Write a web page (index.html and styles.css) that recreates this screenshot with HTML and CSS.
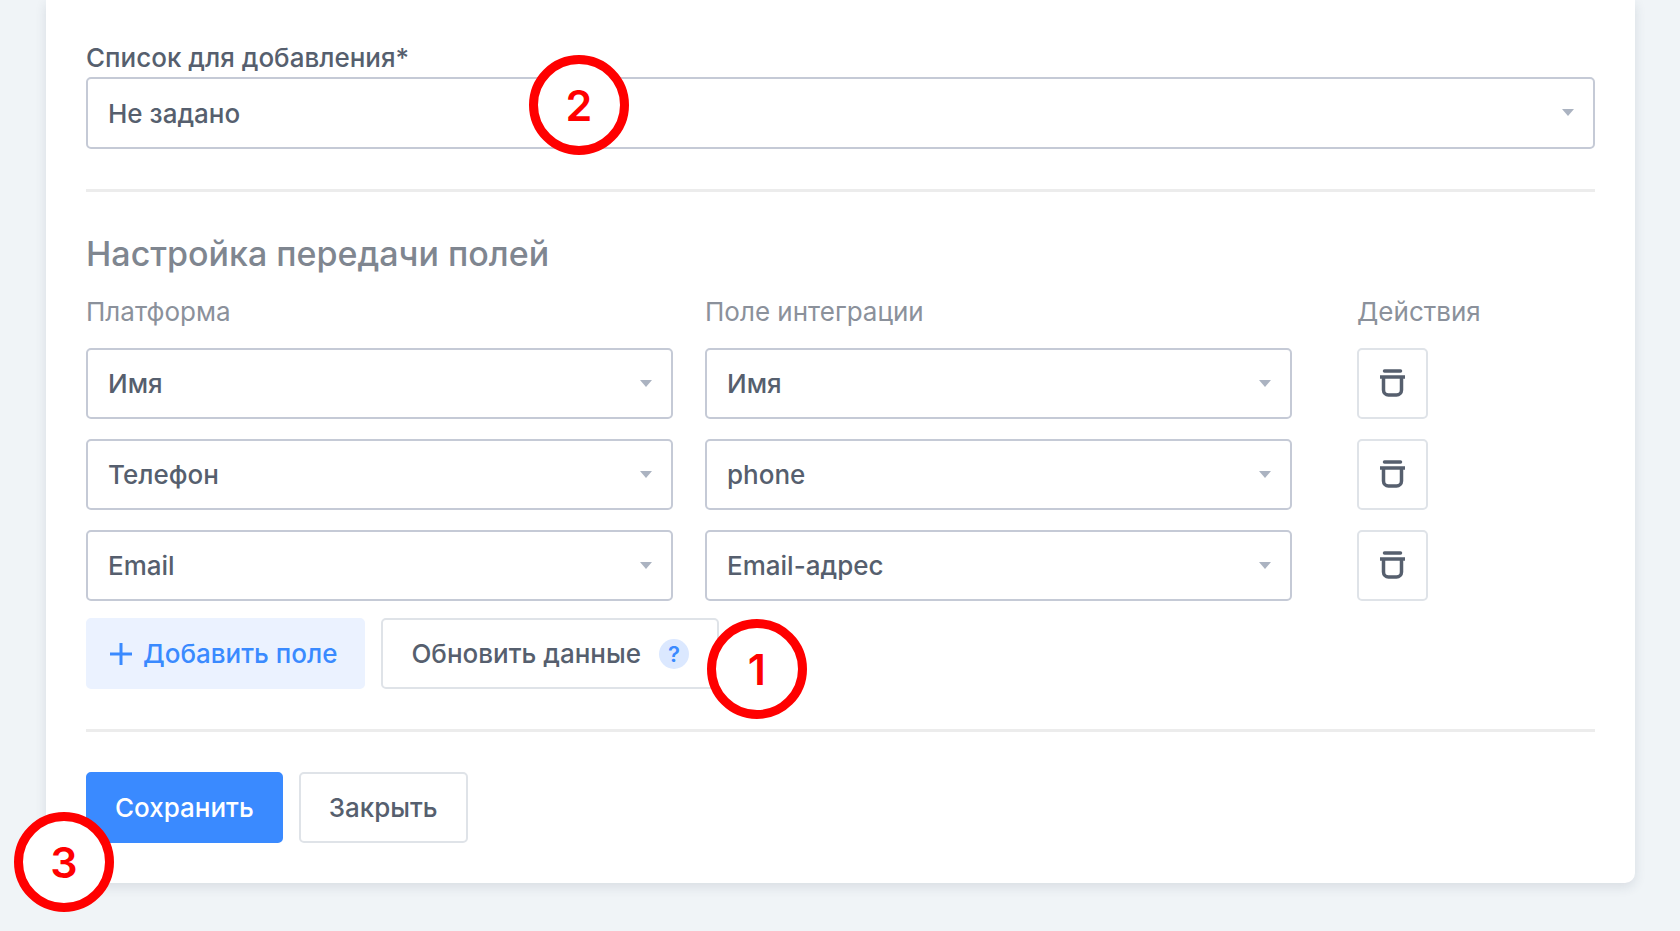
FILE: index.html
```html
<!DOCTYPE html>
<html lang="ru">
<head>
    <meta charset="UTF-8">
    <meta name="viewport" content="width=device-width, initial-scale=1.0">
    <title>Настройка интеграции</title>
    <link rel="stylesheet" href="styles.css">
</head>
<body>
    <main class="card">
        <form class="settings">
            <div class="field">
                <label class="field-label" for="list">Список для добавления*</label>
                <div class="select select-main">
                    <select id="list">
                        <option>Не задано</option>
                    </select>
                    <span class="badge badge-list">2</span>
                </div>
            </div>

            <hr>

            <h2>Настройка передачи полей</h2>

            <div class="mapping">
                <span class="col-title" id="col-platform">Платформа</span>
                <span class="col-title" id="col-integration">Поле интеграции</span>
                <span class="col-title actions">Действия</span>

                <div class="select">
                    <select aria-labelledby="col-platform">
                        <option>Имя</option>
                    </select>
                </div>
                <div class="select">
                    <select aria-labelledby="col-integration">
                        <option>Имя</option>
                    </select>
                </div>
                <div class="actions">
                    <button type="button" class="btn btn-icon" aria-label="Удалить">
                        <svg width="25" height="31" viewBox="0 0 25 31" fill="none" stroke="#565f6e" stroke-width="3.500">
                            <path d="M4.500 3H20.500" stroke-linecap="round"/>
                            <path d="M0 9H25"/>
                            <path d="M3.500 9V22A5 5 0 0 0 8.500 27H16.500A5 5 0 0 0 21.500 22V9"/>
                        </svg>
                    </button>
                </div>

                <div class="select">
                    <select aria-labelledby="col-platform">
                        <option>Телефон</option>
                    </select>
                </div>
                <div class="select">
                    <select aria-labelledby="col-integration">
                        <option>phone</option>
                    </select>
                </div>
                <div class="actions">
                    <button type="button" class="btn btn-icon" aria-label="Удалить">
                        <svg width="25" height="31" viewBox="0 0 25 31" fill="none" stroke="#565f6e" stroke-width="3.500">
                            <path d="M4.500 3H20.500" stroke-linecap="round"/>
                            <path d="M0 9H25"/>
                            <path d="M3.500 9V22A5 5 0 0 0 8.500 27H16.500A5 5 0 0 0 21.500 22V9"/>
                        </svg>
                    </button>
                </div>

                <div class="select">
                    <select aria-labelledby="col-platform">
                        <option>Email</option>
                    </select>
                </div>
                <div class="select">
                    <select aria-labelledby="col-integration">
                        <option>Email-адрес</option>
                    </select>
                </div>
                <div class="actions">
                    <button type="button" class="btn btn-icon" aria-label="Удалить">
                        <svg width="25" height="31" viewBox="0 0 25 31" fill="none" stroke="#565f6e" stroke-width="3.500">
                            <path d="M4.500 3H20.500" stroke-linecap="round"/>
                            <path d="M0 9H25"/>
                            <path d="M3.500 9V22A5 5 0 0 0 8.500 27H16.500A5 5 0 0 0 21.500 22V9"/>
                        </svg>
                    </button>
                </div>
            </div>

            <div class="buttons">
                <button type="button" class="btn btn-add">
                    <svg width="22" height="22" viewBox="0 0 22 22" fill="none" stroke="#3a8aff" stroke-width="3">
                        <path d="M11 0V22M0 11H22"/>
                    </svg>
                    Добавить поле
                </button>
                <div class="btn-wrap">
                    <button type="button" class="btn btn-refresh">
                        Обновить данные
                        <span class="hint">?</span>
                    </button>
                    <span class="badge badge-refresh">1</span>
                </div>
            </div>

            <hr>

            <div class="buttons">
                <div class="btn-wrap">
                    <button type="submit" class="btn btn-save">Сохранить</button>
                    <span class="badge badge-save">3</span>
                </div>
                <button type="button" class="btn">Закрыть</button>
            </div>
        </form>
    </main>
</body>
</html>
```

FILE: styles.css
```css
* {
    box-sizing: border-box;
}

body {
    margin: 0;
    padding: 0 45px 46px 46px;
    background-color: #f0f4f7;
    font-family: Inter, "Noto Sans", sans-serif;
    font-size: 26px;
    font-weight: 500;
    line-height: 32px;
    color: #565f6e;
}

.card {
    padding: 42px 40px 40px;
    background-color: #fff;
    border-radius: 0 0 10px 10px;
    box-shadow: 0 4px 12px rgba(40, 60, 80, 0.12);
}

.field-label {
    display: block;
    margin-bottom: 3px;
}

/* Drop-downs */
.select {
    position: relative;
}

.select::after {
    content: "";
    position: absolute;
    top: 32px;
    right: 21px;
    border: 6px solid transparent;
    border-top: 7px solid #abb3c1;
    border-bottom: none;
    pointer-events: none;
}

select {
    display: block;
    width: 100%;
    height: 71px;
    padding: 1px 48px 0 20px;
    font: inherit;
    color: inherit;
    background-color: #fff;
    border: 2px solid #c5cad6;
    border-radius: 5px;
    appearance: none;
}

.select-main select {
    height: 72px;
}

hr {
    height: 3px;
    margin: 40px 0;
    border: none;
    background-color: #ececec;
}

h2 {
    margin: 0 0 20px;
    font-size: 34px;
    font-weight: 500;
    line-height: 44px;
    color: #7f8690;
}

/* Field mapping */
.mapping {
    display: grid;
    grid-template-columns: 13fr 13fr 6fr;
    gap: 20px 32px;
    margin-bottom: 17px;
}

.col-title {
    font-weight: 400;
    color: #8b919b;
}

.actions {
    padding-left: 33px;
}

/* Buttons */
.buttons {
    display: flex;
    gap: 16px;
}

.btn-wrap {
    position: relative;
}

.btn {
    display: flex;
    align-items: center;
    justify-content: center;
    height: 71px;
    padding: 0 28px;
    font: inherit;
    color: inherit;
    background-color: #fff;
    border: 2px solid #dfe3e8;
    border-radius: 5px;
    cursor: pointer;
}

.btn-icon {
    width: 71px;
    padding: 0;
}

.btn-add {
    gap: 11px;
    padding: 0 26px 0 22px;
    color: #3a8aff;
    background-color: #ebf2ff;
    border-color: #ebf2ff;
}

.btn-refresh {
    gap: 18px;
}

.btn-save {
    padding: 0 27px;
    color: #fff;
    background-color: #3a8aff;
    border-color: #3a8aff;
}

.hint {
    width: 30px;
    height: 30px;
    border-radius: 50%;
    background-color: #dbe8ff;
    color: #3a8aff;
    font-size: 22px;
    font-weight: 600;
    line-height: 30px;
    text-align: center;
}

/* Step numbers */
.badge {
    position: absolute;
    z-index: 1;
    width: 100px;
    height: 100px;
    border: 9px solid #f00;
    border-radius: 50%;
    background-color: #fff;
    color: #f00;
    font-size: 43px;
    font-weight: 600;
    line-height: 82px;
    text-align: center;
}

.badge-list {
    top: -22px;
    left: 443px;
}

.badge-refresh {
    top: 1px;
    right: -88px;
}

.badge-save {
    top: 40px;
    left: -72px;
}
```
